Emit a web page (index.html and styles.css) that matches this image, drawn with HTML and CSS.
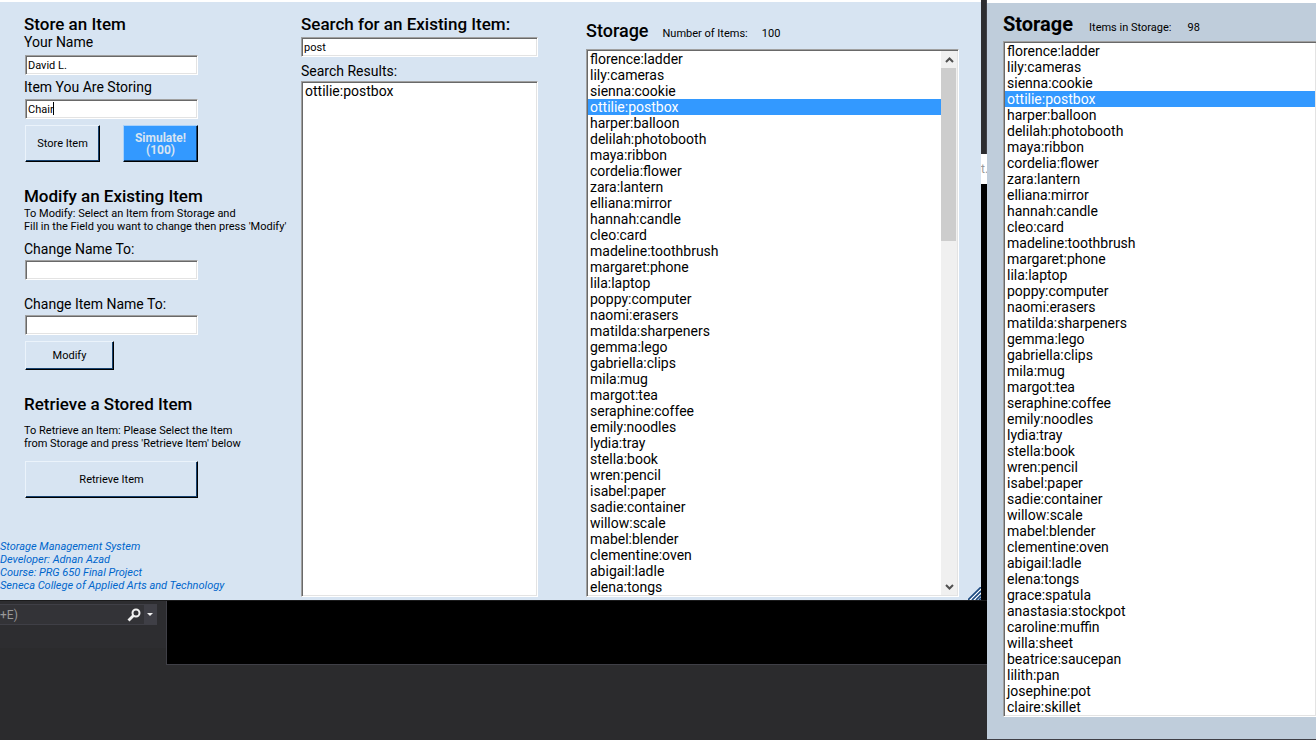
FILE: index.html
```
<!DOCTYPE html>
<html lang="en">
<head>
<meta charset="utf-8">
<title>Storage Management System</title>
<link rel="stylesheet" href="styles.css">
</head>
<body>
<div class="desktop">
  <div class="workspace">
    <div class="upper">
      <main class="window">
        <form class="forms">
          <section>
            <h2>Store an Item</h2>
            <label for="owner">Your Name</label>
            <input class="field" id="owner" type="text" value="David L.">
            <label class="second" for="item">Item You Are Storing</label>
            <div class="caret-field">
              <input class="field" id="item" type="text" value="Chair">
              <span class="caret"></span>
            </div>
            <div class="actions">
              <button class="btn" type="button">Store Item</button>
              <button class="btn primary" type="button">Simulate!<br>(100)</button>
            </div>
          </section>
          <section>
            <h2>Modify an Existing Item</h2>
            <p class="hint">To Modify: Select an Item from Storage and<br>Fill in the Field you want to change then press 'Modify'</p>
            <label class="change" for="new-name">Change Name To:</label>
            <input class="field" id="new-name" type="text">
            <label class="change next" for="new-item">Change Item Name To:</label>
            <input class="field" id="new-item" type="text">
            <button class="btn modify" type="button">Modify</button>
          </section>
          <section>
            <h2>Retrieve a Stored Item</h2>
            <p class="hint spaced">To Retrieve an Item: Please Select the Item<br>from Storage and press 'Retrieve Item' below</p>
            <button class="btn retrieve" type="button">Retrieve Item</button>
          </section>
          <p class="credits">Storage Management System<br>Developer: Adnan Azad<br>Course: PRG 650 Final Project<br>Seneca College of Applied Arts and Technology</p>
        </form>
        <section class="search">
          <label class="title" for="query">Search for an Existing Item:</label>
          <input class="field wide" id="query" type="text" value="post">
          <label class="results-label" for="results">Search Results:</label>
          <div class="sunken grow">
            <select class="list" id="results" size="32"><option>ottilie:postbox</option></select>
          </div>
        </section>
        <section class="storage">
          <div class="head">
            <h2><label for="storage">Storage</label></h2>
            <span class="count">Number of Items:</span>
            <span class="count">100</span>
          </div>
          <div class="sunken">
            <select class="list" id="storage" size="34">
              <option>florence:ladder</option><option>lily:cameras</option><option>sienna:cookie</option><option selected>ottilie:postbox</option><option>harper:balloon</option><option>delilah:photobooth</option><option>maya:ribbon</option><option>cordelia:flower</option><option>zara:lantern</option><option>elliana:mirror</option><option>hannah:candle</option><option>cleo:card</option><option>madeline:toothbrush</option><option>margaret:phone</option><option>lila:laptop</option><option>poppy:computer</option><option>naomi:erasers</option><option>matilda:sharpeners</option><option>gemma:lego</option><option>gabriella:clips</option><option>mila:mug</option><option>margot:tea</option><option>seraphine:coffee</option><option>emily:noodles</option><option>lydia:tray</option><option>stella:book</option><option>wren:pencil</option><option>isabel:paper</option><option>sadie:container</option><option>willow:scale</option><option>mabel:blender</option><option>clementine:oven</option><option>abigail:ladle</option><option>elena:tongs</option>
            </select>
            <div class="scrollbar">
              <button class="arrow" type="button" aria-label="Scroll up"><svg width="9" height="6" viewBox="0 0 9 6"><path d="M1 5L4.500 1.500L8 5" fill="none" stroke="#505050" stroke-width="2"/></svg></button>
              <div class="track"><div class="thumb"></div></div>
              <button class="arrow" type="button" aria-label="Scroll down"><svg width="9" height="6" viewBox="0 0 9 6"><path d="M1 1L4.500 4.500L8 1" fill="none" stroke="#505050" stroke-width="2"/></svg></button>
            </div>
          </div>
        </section>
        <svg class="grip" width="13" height="13" viewBox="0 0 13 13"><path d="M0 13L13 0M4 13L13 4M8 13L13 8M11 13L13 11" stroke="#1d4a80" stroke-width="1.600"/><path d="M2 13L13 2M6 13L13 6" stroke="#fff" stroke-width="1"/></svg>
      </main>
      <div class="sliver"><div class="sliver-dark"></div><div class="sliver-tab">t.</div></div>
    </div>
    <div class="lower">
      <div class="ide">
        <div class="ide-search">
          <span class="shortcut">+E)</span>
          <button class="lens" type="button" aria-label="Search"><svg width="14" height="14" viewBox="0 0 14 14"><circle cx="9" cy="5" r="3.500" fill="none" stroke="#f1f1f1" stroke-width="2"/><path d="M6.500 7.500L1.500 12.500" stroke="#f1f1f1" stroke-width="2.800"/></svg></button>
          <button class="more" type="button" aria-label="Search options"><svg width="6" height="3" viewBox="0 0 6 3"><path d="M0 0H6L3 3Z" fill="#f1f1f1"/></svg></button>
        </div>
      </div>
      <div class="console"></div>
    </div>
  </div>
  <aside class="remote">
    <div class="head">
      <h1><label for="remote-list">Storage</label></h1>
      <span class="count">Items in Storage:</span>
      <span class="count">98</span>
    </div>
    <div class="sunken open">
      <select class="list" id="remote-list" size="42">
        <option>florence:ladder</option><option>lily:cameras</option><option>sienna:cookie</option><option selected>ottilie:postbox</option><option>harper:balloon</option><option>delilah:photobooth</option><option>maya:ribbon</option><option>cordelia:flower</option><option>zara:lantern</option><option>elliana:mirror</option><option>hannah:candle</option><option>cleo:card</option><option>madeline:toothbrush</option><option>margaret:phone</option><option>lila:laptop</option><option>poppy:computer</option><option>naomi:erasers</option><option>matilda:sharpeners</option><option>gemma:lego</option><option>gabriella:clips</option><option>mila:mug</option><option>margot:tea</option><option>seraphine:coffee</option><option>emily:noodles</option><option>lydia:tray</option><option>stella:book</option><option>wren:pencil</option><option>isabel:paper</option><option>sadie:container</option><option>willow:scale</option><option>mabel:blender</option><option>clementine:oven</option><option>abigail:ladle</option><option>elena:tongs</option><option>grace:spatula</option><option>anastasia:stockpot</option><option>caroline:muffin</option><option>willa:sheet</option><option>beatrice:saucepan</option><option>lilith:pan</option><option>josephine:pot</option><option>claire:skillet</option>
      </select>
    </div>
  </aside>
</div>
</body>
</html>
```
FILE: styles.css
```
* { box-sizing: border-box; }
body {
  margin: 0;
  background: #2b2b2d;
  color: #000;
  font: 14px/16px Roboto, "Liberation Sans", sans-serif;
}
h1, h2, p { margin: 0; }
h1 { font-size: 20px; line-height: 24px; font-weight: 700; }
h2, .title { font-size: 17px; line-height: 20px; font-weight: 500; }
label { display: block; }
button, input, select { font: inherit; color: inherit; margin: 0; border-radius: 0; }

.desktop {
  display: grid;
  grid-template-columns: minmax(0, 3fr) minmax(0, 1fr);
  align-items: start;
  min-height: 100vh;
}
.upper { display: flex; }
.window {
  position: relative;
  flex: 1;
  display: flex;
  padding: 0 22px 3px 24px;
  background: #d7e4f2;
  border-top: 2px solid #fff;
}
.forms { width: 277px; padding: 12px 0 5px; }
.search { display: flex; flex-direction: column; width: 237px; padding-top: 12px; }
.storage { flex: 1; margin-left: 48px; padding-top: 19px; }
.storage h2 { font-size: 18px; }

.field {
  display: block;
  width: 173px;
  height: 20px;
  margin: 5px 0 0 1px;
  padding: 0 2px;
  border: 1px solid;
  border-color: #a0a0a0 #fff #fff #a0a0a0;
  background: #fff;
  box-shadow: inset 1px 1px #696969, inset -1px -1px #e3e3e3;
  font-size: 11px;
  outline: 0;
}
.field.wide { width: 100%; margin: 3px 0 0; }
.second { margin-top: 4px; }
.caret-field { position: relative; }
.caret-field .field { margin-top: 4px; }
.caret { position: absolute; left: 29px; top: 3px; width: 1px; height: 13px; background: #000; }
.results-label { margin: 6px 0 2px; }
.change { margin-top: 8px; }
.change.next { margin-top: 16px; }
.change + .field { margin-top: 3px; }

.btn {
  height: 37px;
  padding: 0;
  border: 1px solid;
  border-color: #ebf3fb #000 #000 #ebf3fb;
  background: #d7e4f2;
  box-shadow: inset -1px -1px #16416e;
  font-size: 11px;
  line-height: 12px;
}
.actions { display: flex; gap: 23px; margin: 6px 0 24px 1px; }
.actions .btn { width: 75px; }
.btn.primary { background: #3399ff; border-color: #a8d1fb #000 #000 #a8d1fb; color: #d7e4f2; font-size: 12px; font-weight: 700; }
.modify { display: block; width: 89px; height: 29px; margin: 6px 0 24px 1px; }
.retrieve { display: block; width: 173px; margin: 11px 0 42px 1px; }
.hint { margin-top: 1px; font-size: 11px; line-height: 13px; white-space: nowrap; }
.hint.spaced { margin-top: 10px; }
.credits {
  margin-left: -24px;
  color: #0066cc;
  font-size: 11px;
  line-height: 13px;
  font-style: italic;
  white-space: nowrap;
}

.head { display: flex; align-items: baseline; gap: 14px; }
.count { font-size: 11px; }
.sunken {
  display: flex;
  padding: 1px;
  border: 1px solid;
  border-color: #a0a0a0 #fff #fff #a0a0a0;
  background: #fff;
  box-shadow: inset 1px 1px #696969, inset -1px -1px #e3e3e3;
}
.grow { flex: 1; }
.storage .sunken { margin-top: 7px; }
.list {
  flex: 1;
  min-width: 0;
  padding: 0;
  border: 0;
  background: #fff;
  outline: 0;
  overflow: hidden;
}
.list option { height: 16px; min-height: 16px; padding: 0 2px; line-height: 16px; }
.list option:checked { background: linear-gradient(#3399ff, #3399ff); -webkit-text-fill-color: #fff; }
.scrollbar { display: flex; flex-direction: column; width: 16px; background: #f0f0f0; }
.arrow { display: grid; place-items: center; height: 17px; padding: 0; border: 0; background: none; }
.track { flex: 1; }
.thumb { width: 15px; height: 34%; background: #cdcdcd; }
.grip { position: absolute; right: 0; bottom: 0; }

.sliver { display: flex; flex-direction: column; width: 6px; background: #000; }
.sliver-dark { height: 154px; background: #2d2d30; border-right: 1px solid #3f3f46; }
.sliver-tab { height: 30px; overflow: hidden; background: #fff; color: #999; font-size: 12px; line-height: 30px; }

.lower { display: flex; border-top: 1px solid #1b1b1c; }
.ide { width: 166px; padding-top: 3px; background: #2d2d30; border-bottom: 17px solid #2b2b2d; }
.ide-search {
  display: flex;
  align-items: center;
  width: 157px;
  height: 21px;
  border: 1px solid #3f3f46;
  border-left: 0;
  background: #333337;
  color: #999;
  font-size: 12px;
}
.shortcut { flex: 1; }
.lens, .more { display: grid; place-items: center; height: 19px; padding: 0; border: 0; background: none; }
.lens { width: 20px; }
.more { width: 12px; background: #3f3f46; }
.console { flex: 1; height: 64px; background: #000; border: solid #3f3f46; border-width: 0 0 1px 1px; }

.remote {
  border-top: 3px solid #fff;
  padding: 9px 0 22px 16px;
  background: #bfcddb;
  border-bottom: 1px solid #3f3f46;
  overflow: hidden;
}
.remote .head { align-items: flex-end; gap: 16px; margin-bottom: 5px; }
.open { border-right: 0; }
```
